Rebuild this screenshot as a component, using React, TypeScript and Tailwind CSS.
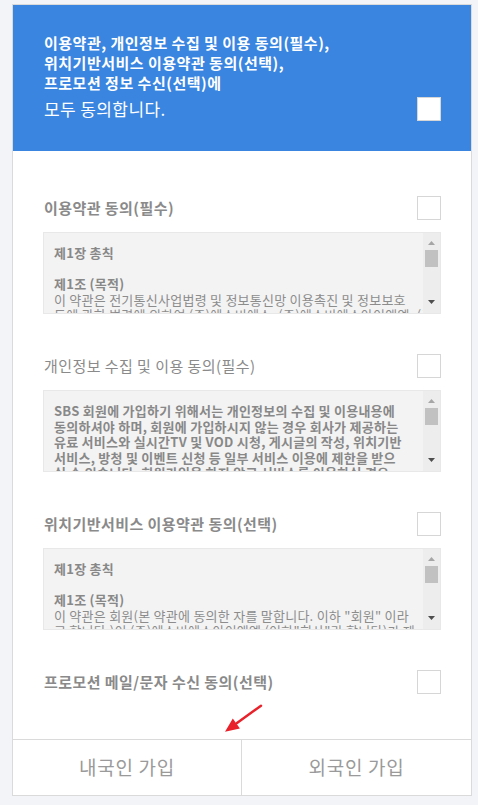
import React from 'react';

type Term = {
  title: string;
  weight: string;
  lines: { text: string; bold?: boolean }[];
};

const ScrollTrack: React.FC = () => (
  <div className="w-[17px] shrink-0 bg-[#ededed] flex flex-col items-center">
    <svg width="9" height="6" viewBox="0 0 9 6" className="mt-[7px]">
      <path d="M4.5 1 L8 5 L1 5 Z" fill="#a6a6a6" />
    </svg>
    <div className="mt-[4px] w-[13px] h-[17px] bg-[#c1c1c1]" />
    <div className="flex-1" />
    <svg width="9" height="6" viewBox="0 0 9 6" className="mb-[8px]">
      <path d="M1 1 L8 1 L4.5 5 Z" fill="#4d4d4d" />
    </svg>
  </div>
);

const CheckBox: React.FC = () => (
  <div className="w-6 h-6 shrink-0 bg-white border border-[#d6d6d6]" />
);

const terms: Term[] = [
  {
    title: '이용약관 동의(필수)',
    weight: 'font-bold',
    lines: [
      { text: '제1장 총칙', bold: true },
      { text: '\u00a0' },
      { text: '제1조 (목적)', bold: true },
      { text: '이 약관은 전기통신사업법령 및 정보통신망 이용촉진 및 정보보호' },
      { text: '등에 관한 법령에 의하여 (주)에스비에스, (주)에스비에스아이앤엠, (주' },
    ],
  },
  {
    title: '개인정보 수집 및 이용 동의(필수)',
    weight: 'font-normal',
    lines: [
      { text: 'SBS 회원에 가입하기 위해서는 개인정보의 수집 및 이용내용에', bold: true },
      { text: '동의하셔야 하며, 회원에 가입하시지 않는 경우 회사가 제공하는', bold: true },
      { text: '유료 서비스와 실시간TV 및 VOD 시청, 게시글의 작성, 위치기반', bold: true },
      { text: '서비스, 방청 및 이벤트 신청 등 일부 서비스 이용에 제한을 받으', bold: true },
      { text: '실 수 있습니다. 회원가입을 하지 않고 서비스를 이용하실 경우', bold: true },
    ],
  },
  {
    title: '위치기반서비스 이용약관 동의(선택)',
    weight: 'font-bold',
    lines: [
      { text: '제1장 총칙', bold: true },
      { text: '\u00a0' },
      { text: '제1조 (목적)', bold: true },
      { text: '이 약관은 회원(본 약관에 동의한 자를 말합니다. 이하 "회원" 이라' },
      { text: '고 합니다.)이 (주)에스비에스아이앤엠 (이하"회사"라 합니다)가 제' },
    ],
  },
];

export default function App() {
  return (
    <div
      className="relative min-h-screen bg-[#f3f4f8] pt-1 px-3 pb-2"
      style={{ fontFamily: '"Noto Sans CJK KR", "Noto Sans", sans-serif' }}
    >
      <div className="w-[460px] bg-white border border-[#dadada]">
        {/* All agree header */}
        <div className="bg-[#3a85e0] pl-[31px] pr-[30px] pt-[28px] pb-[30px] text-white">
          <p className="text-[15px] font-bold leading-[20px] tracking-[0.5px] whitespace-nowrap">
            이용약관, 개인정보 수집 및 이용 동의(필수),
            <br />
            위치기반서비스 이용약관 동의(선택),
            <br />
            프로모션 정보 수신(선택)에
          </p>
          <div className="mt-1 flex items-center justify-between">
            <span className="text-[17px] leading-6 tracking-[0.4px]">모두 동의합니다.</span>
            <CheckBox />
          </div>
        </div>

        {/* Terms */}
        <div className="px-[30px] pt-[45px] pb-[45px] flex flex-col gap-[40px]">
          {terms.map((term) => (
            <div key={term.title}>
              <div className="h-6 flex items-center justify-between">
                <span className={`${term.weight} text-[15px] tracking-[0.45px] text-[#8a8a8a] pl-px`}>
                  {term.title}
                </span>
                <CheckBox />
              </div>
              <div className="mt-3 h-[82px] flex bg-[#f3f3f3] border border-[#e8e8e8] overflow-hidden">
                <div className="flex-1 min-w-0 pl-[10px] pt-[12px] text-[13px] leading-[15.6px] tracking-[0.25px] text-[#8c8c8c] overflow-hidden">
                  {term.lines.map((line, i) => (
                    <div key={i} className={`whitespace-nowrap ${line.bold ? 'font-bold text-[#888]' : ''}`}>
                      {line.text}
                    </div>
                  ))}
                </div>
                <ScrollTrack />
              </div>
            </div>
          ))}

          <div className="h-6 flex items-center justify-between">
            <span className="text-[15px] font-bold tracking-[0.45px] text-[#8a8a8a] pl-px">
              프로모션 메일/문자 수신 동의(선택)
            </span>
            <CheckBox />
          </div>
        </div>

        {/* Join buttons */}
        <div className="grid grid-cols-2 border-t border-[#dadada] h-[56px]">
          <button className="border-r border-[#dadada] text-[19px] tracking-[0.7px] text-[#9a9a9a]">내국인 가입</button>
          <button className="text-[19px] tracking-[0.7px] text-[#9a9a9a]">외국인 가입</button>
        </div>
      </div>

      {/* Annotation arrow */}
      <svg className="absolute left-[222px] top-[702px]" width="44" height="34" viewBox="0 0 44 34">
        <line x1="39" y1="3.7" x2="15" y2="21" stroke="#e8212a" strokeWidth="2.5" strokeLinecap="round" />
        <polygon points="3,29.7 10.8,16.6 17.9,26.4" fill="#e8212a" />
      </svg>
    </div>
  );
}
